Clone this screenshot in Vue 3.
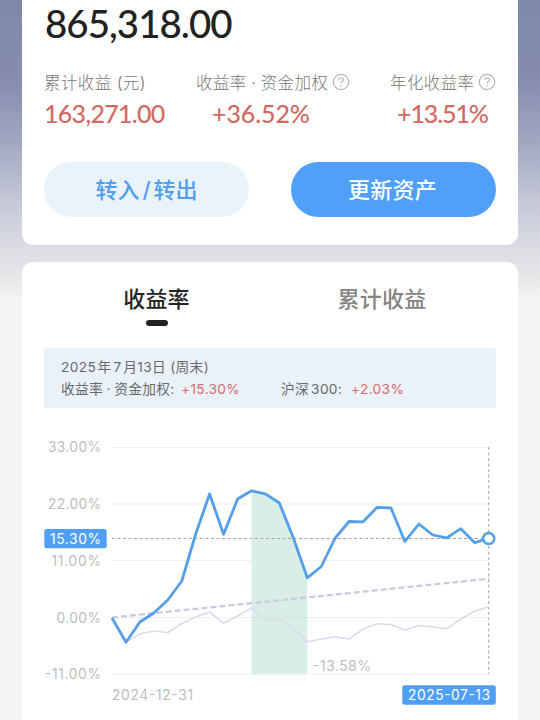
<template>
  <main class="page">
    <section class="card summary">
      <div class="total">865,318.00</div>
      <div class="stats">
        <div class="stat first">
          <p class="label">累计收益 (元)</p>
          <p class="value">163,271.00</p>
        </div>
        <div class="stat second">
          <p class="label">收益率 · 资金加权
            <svg class="help" viewBox="0 0 18 18"><circle cx="9" cy="9" r="7.7" /><path d="M6.7 7.1c0-3.2 4.7-3 4.7-.2 0 1.7-2.3 1.8-2.3 3.7M9.1 12.2v1.2" /></svg>
          </p>
          <p class="value">+36.52%</p>
        </div>
        <div class="stat third">
          <p class="label">年化收益率
            <svg class="help" viewBox="0 0 18 18"><circle cx="9" cy="9" r="7.7" /><path d="M6.7 7.1c0-3.2 4.7-3 4.7-.2 0 1.7-2.3 1.8-2.3 3.7M9.1 12.2v1.2" /></svg>
          </p>
          <p class="value">+13.51%</p>
        </div>
      </div>
      <div class="actions">
        <button class="light">转入<span class="slash">/</span>转出</button>
        <button class="solid">更新资产</button>
      </div>
    </section>

    <section class="card returns">
      <nav class="tabs">
        <a
          v-for="tab in tabs"
          :key="tab"
          :class="{ active: tab === activeTab }"
          @click="activeTab = tab"
        >{{ tab }}</a>
      </nav>

      <div class="info">
        <p class="date"><span class="year">2025</span>年<span class="month">7</span>月13日 (周末)</p>
        <p class="rates">
          <span class="rate-name">收益率 · 资金加权:</span>
          <span class="up mine">+15.30%</span>
          <span class="index-name">沪深<span class="index-number">300:</span></span>
          <span class="up">+2.03%</span>
        </p>
      </div>

      <svg class="chart" viewBox="0 430 496 290">
        <g class="grid">
          <line v-for="row in rows" :key="row.label" x1="90" x2="467" :y1="row.y" :y2="row.y" />
        </g>
        <g class="axis">
          <text v-for="row in rows" :key="row.label" :x="79 - row.width" :y="row.y + 5" :textLength="row.width">{{ row.label }}</text>
          <text x="90" y="700" textLength="81">2024-12-31</text>
          <text x="291" y="671" textLength="58">-13.58%</text>
        </g>
        <polygon class="drawdown" :points="drawdown" />
        <line class="zero" x1="229.5" x2="285.3" y1="617.5" y2="617.5" />
        <line class="guide" x1="90" x2="467" y1="538.5" y2="538.5" />
        <line class="guide" x1="466.7" x2="466.7" y1="447" y2="674" />
        <polyline class="benchmark" :points="toPoints(index)" />
        <line class="trend" x1="90" x2="467" y1="617.5" y2="578.7" />
        <polyline class="mine-line" :points="toPoints(mine)" />
        <circle class="cursor" cx="466.7" cy="538.5" r="5.6" />
        <rect class="tag" x="22.3" y="529" width="62.4" height="19.3" rx="2.5" />
        <text class="tag-text" x="28" y="543.8" textLength="51">15.30%</text>
        <rect class="tag" x="380.3" y="685.3" width="93.5" height="19.5" rx="2.5" />
        <text class="tag-text" x="386" y="700.3" textLength="82">2025-07-13</text>
      </svg>
    </section>
  </main>
</template>

<script setup>
import { ref } from 'vue';

const tabs = ['收益率', '累计收益'];
const activeTab = ref('收益率');

const rows = [
  { label: '33.00%', y: 447.3, width: 53 },
  { label: '22.00%', y: 504, width: 53 },
  { label: '11.00%', y: 560.7, width: 49.5 },
  { label: '0.00%', y: 617.5, width: 44.5 },
  { label: '-11.00%', y: 674.2, width: 56 },
];

// Heights of the samples, one per week
const mine = [
  618, 642.3, 622, 613, 600, 581, 534, 494, 534.3, 499, 490.8, 493.8, 503, 538,
  577.8, 566.5, 538, 521.5, 521.8, 507.3, 508, 541.5, 524, 535, 537.8, 528.7, 542.7, 538.5,
];
const index = [
  618, 642, 634, 631, 632.7, 623.5, 617, 612, 623.3, 616, 608, 619.7, 620, 628,
  641.8, 639, 636.8, 639, 629, 623.7, 624.5, 630, 625.5, 627, 628.7, 619, 611, 607,
];

const xOf = (i) => (90 + i * 13.95).toFixed(1);
const toPoints = (values) => values.map((y, i) => `${xOf(i)},${y}`).join(' ');

// Area below the largest fall
const drawdown = [
  `${xOf(10)},674`,
  ...mine.slice(10, 15).map((y, i) => `${xOf(i + 10)},${y}`),
  `${xOf(14)},674`,
].join(' ');
</script>

<style>
body {
  margin: 0;
  background: #f3f3f3;
}
</style>

<style scoped>
.page {
  box-sizing: border-box;
  height: 720px;
  overflow: hidden;
  padding: 0 22px;
  display: flex;
  flex-direction: column;
  gap: 17px;
  font-family: Inter, "Noto Sans CJK SC", sans-serif;
  background: linear-gradient(#7f88ab 0, #858cb0 80px, #a1a6c0 140px, #c4c7d7 200px, #dadbe3 245px, #e1e1e6 263px, #f3f3f3 300px);
}

p {
  margin: 0;
}

.card {
  flex-shrink: 0;
  box-sizing: border-box;
  background: #fff;
}

.summary {
  height: 245px;
  padding: 0 22px;
  border-radius: 0 0 11px 11px;
}

.total {
  height: 70px;
  padding-left: 1px;
  line-height: 46px;
  font-family: Lato, sans-serif;
  font-size: 38.5px;
  font-weight: 500;
  letter-spacing: -1px;
  color: #222;
}

.stats {
  display: grid;
  grid-template-columns: 152px 194px 1fr;
  height: 92px;
}

.label {
  display: flex;
  align-items: center;
  height: 23px;
  font-size: 16.5px;
  font-weight: 300;
  letter-spacing: 0.4px;
  white-space: nowrap;
  color: #777;
}

.second .label {
  word-spacing: -0.6px;
}

.help {
  width: 18px;
  height: 18px;
  margin-left: 4px;
  fill: none;
  stroke: #b5b5b5;
  stroke-width: 1.2;
}

.third .help {
  margin-left: 3px;
}

.value {
  line-height: 41px;
  font-family: Lato, sans-serif;
  font-size: 25px;
  font-weight: 500;
  color: #d16964;
}

.first .value {
  letter-spacing: -0.7px;
}

.second .value {
  padding-left: 16px;
  letter-spacing: -0.1px;
}

.third .value {
  padding-left: 7px;
  letter-spacing: -1.1px;
}

.actions {
  display: flex;
  justify-content: space-between;
}

button {
  width: 205px;
  height: 55px;
  padding: 0 0 3px;
  border: none;
  border-radius: 28px;
  font-family: inherit;
  font-size: 22px;
  font-weight: 500;
}

.light {
  color: #4f9df4;
  background: #e8f3fc;
}

.slash {
  margin: 0 3px;
}

.solid {
  padding-right: 2px;
  letter-spacing: 0.3px;
  color: #fff;
  background: #509ff8;
}

.returns {
  height: 470px;
  padding-top: 20px;
  border-radius: 11px 11px 0 0;
}

.tabs {
  display: grid;
  grid-template-columns: 225px 226px;
  padding-left: 22px;
  height: 66px;
}

.tabs a {
  display: flex;
  flex-direction: column;
  align-items: center;
  line-height: 34px;
  font-size: 22px;
  font-weight: 500;
  letter-spacing: 0.2px;
  color: #858585;
}

.tabs .active {
  color: #222;
}

.active::after {
  content: "";
  width: 22px;
  height: 5.5px;
  margin-top: 4px;
  border-radius: 3px;
  background: #222;
}

.info {
  box-sizing: border-box;
  height: 60px;
  margin: 0 22px;
  padding: 8px 17px;
  border-radius: 2px;
  font-size: 13.7px;
  line-height: 22px;
  letter-spacing: 0.35px;
  white-space: nowrap;
  color: #666a70;
  background: #ebf1f9;
}

.year,
.month {
  margin-right: 1.5px;
}

.month {
  margin-left: 2px;
}

.rates {
  display: flex;
}

.rate-name {
  width: 120px;
  word-spacing: -0.8px;
}

.mine {
  width: 100px;
}

.index-name {
  width: 70px;
}

.index-number {
  margin-left: 2px;
}

.up {
  color: #d66a6c;
}

.chart {
  display: block;
  width: 496px;
  height: 290px;
  margin-top: 22px;
  font-size: 13.8px;
}

.grid line {
  stroke: #eee;
  stroke-width: 1;
}

.zero {
  stroke: #d3e3dc;
  stroke-width: 1;
}

.axis {
  fill: #bdbdbd;
}

.drawdown {
  fill: #d9eee6;
}

.guide {
  stroke: #a5a5a5;
  stroke-width: 1;
  stroke-dasharray: 3 2.5;
}

.benchmark {
  fill: none;
  stroke: #dcdaeb;
  stroke-width: 1.6;
}

.trend {
  stroke: #c3cbdc;
  stroke-width: 2.2;
  stroke-dasharray: 6 3;
}

.mine-line {
  fill: none;
  stroke: #559fe7;
  stroke-width: 2.8;
  stroke-linejoin: round;
}

.cursor {
  fill: #fff;
  stroke: #559fe7;
  stroke-width: 2.5;
}

.tag {
  fill: #509ff5;
}

.tag-text {
  fill: #fff;
}
</style>
